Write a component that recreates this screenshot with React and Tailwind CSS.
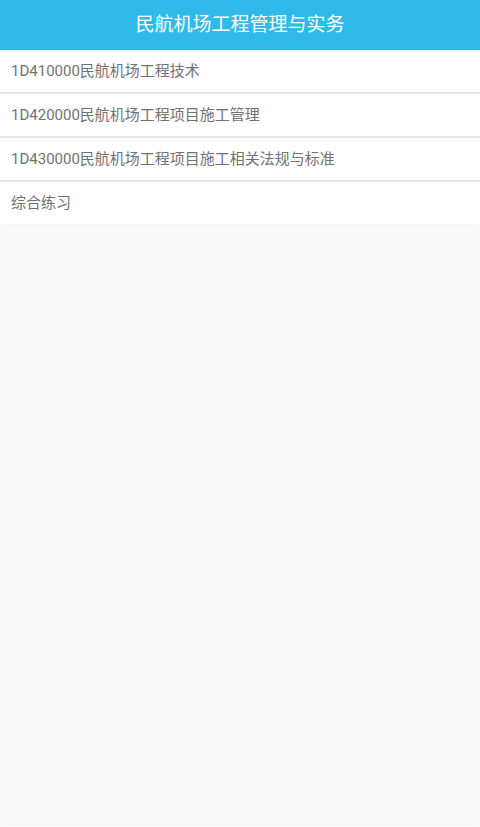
import React from 'react';

const items = [
  '1D410000民航机场工程技术',
  '1D420000民航机场工程项目施工管理',
  '1D430000民航机场工程项目施工相关法规与标准',
  '综合练习',
];

const App = () => {
  return (
    <div
      className="w-[480px] h-[827px] flex flex-col bg-white"
      style={{ fontFamily: 'Roboto, "Noto Sans CJK SC", sans-serif' }}
    >
      <header className="h-[50px] shrink-0 bg-[#31b9e9] flex items-center justify-center">
        <h1 className="text-[19px] text-white">民航机场工程管理与实务</h1>
      </header>
      <ul>
        {items.map((item, i) => (
          <li
            key={item}
            className={
              i < items.length - 1
                ? 'h-[44px] flex items-center pl-[11px] text-[15px] text-[#727272] border-b-2 border-[#e6e6e6]'
                : 'h-[42px] flex items-center pl-[11px] text-[15px] text-[#727272]'
            }
          >
            {item}
          </li>
        ))}
      </ul>
      <div className="flex-1 mx-px mb-px bg-[#fafafa] border border-[#f4f4f4]"></div>
    </div>
  );
};

export default App;
